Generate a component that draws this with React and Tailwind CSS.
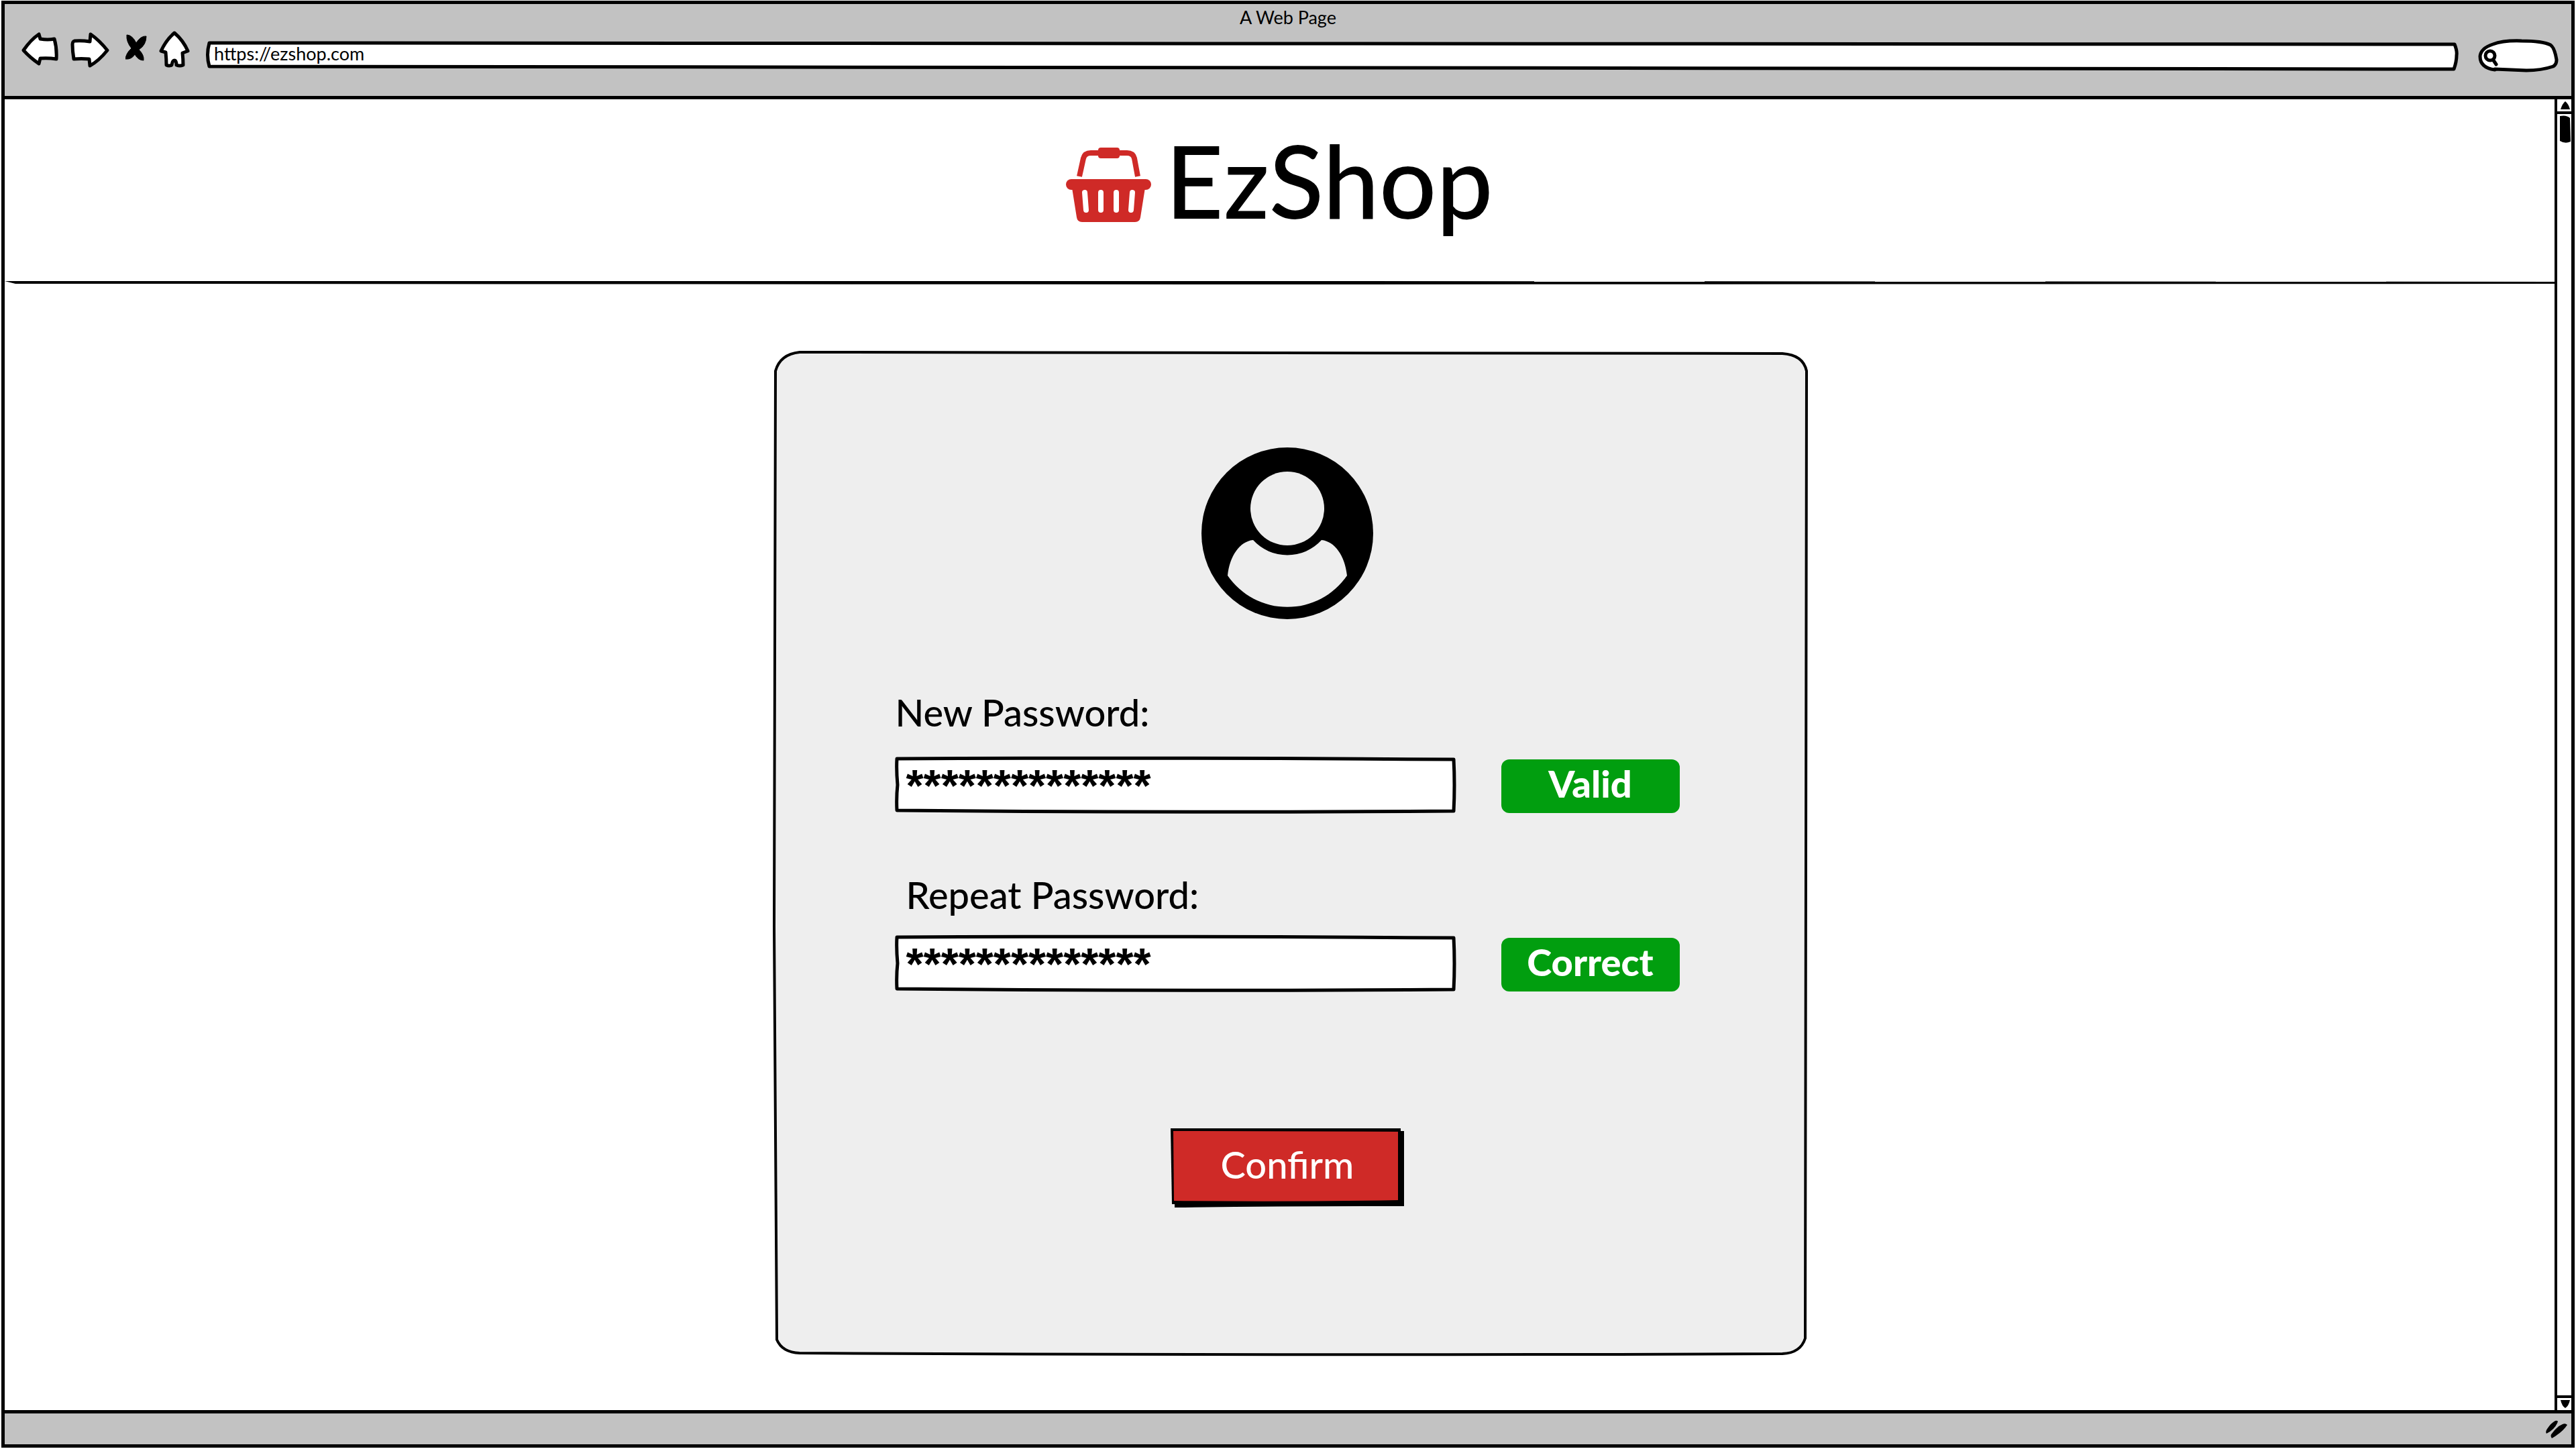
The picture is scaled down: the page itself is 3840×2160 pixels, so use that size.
import React from "react";

const iconStroke = {
  fill: "#fff",
  stroke: "#000",
  strokeWidth: 5,
  strokeLinejoin: "round",
  strokeLinecap: "round",
};

function NavButton({ label, className, viewBox, children }) {
  return (
    <button type="button" aria-label={label} className="block shrink-0">
      <svg viewBox={viewBox} className={className} aria-hidden="true">
        {children}
      </svg>
    </button>
  );
}

// Hand-drawn outline that stretches with the box it decorates.
function Sketch({ viewBox, children }) {
  return (
    <svg
      viewBox={viewBox}
      preserveAspectRatio="none"
      aria-hidden="true"
      className="pointer-events-none absolute inset-0 h-full w-full overflow-visible"
    >
      {children}
    </svg>
  );
}

function BrowserBar() {
  return (
    <header className="shrink-0 border-b-5 border-black bg-[#c2c2c2] pb-9">
      <p className="text-center text-[27px] leading-10">A Web Page</p>
      <div className="flex h-[61px] items-start pr-[19px] pl-6">
        <nav aria-label="Browser" className="flex">
          <NavButton label="Back" className="h-15 w-14" viewBox="31 46 56 60">
            <path
              {...iconStroke}
              d="M35 75 Q46 59 58 51 L60 58 Q71 60 81 58 Q85 72 84 88 Q72 86 60 87 L58 95 Q45 86 35 75Z"
            />
          </NavButton>
          <NavButton label="Forward" className="ml-4 h-15 w-15" viewBox="103 46 60 60">
            <path
              {...iconStroke}
              d="M111 61 Q122 60 134 62 L135 51 Q148 60 160 75 Q147 91 134 98 L133 88 Q121 87 110 88 Q108 76 108 66 Q108 62 111 61Z"
            />
          </NavButton>
          <NavButton label="Stop" className="ml-6 h-15 w-8" viewBox="188 46 32 60">
            <path
              d="M190 52 Q198 52 204 64 Q211 53 219 54 Q219 67 208 74 Q216 82 215 90 Q207 90 202 81 Q197 89 188 88 Q189 79 197 72 Q189 62 190 52Z"
              stroke="#000"
              strokeWidth="1"
            />
          </NavButton>
          <NavButton label="Home" className="ml-4 h-15 w-12" viewBox="235 46 48 60">
            <path
              {...iconStroke}
              d="M260 49 Q273 60 280 76 L272 79 Q273 88 273 97 Q268 99 263 97 Q263 90 260 90 Q257 90 256 97 Q252 99 248 97 Q248 88 247 78 L240 76 Q248 59 260 49Z"
            />
          </NavButton>
        </nav>
        <div className="relative mt-4 ml-6 h-11 flex-1">
          <Sketch viewBox="0 0 3357 44">
            <path
              {...iconStroke}
              vectorEffect="non-scaling-stroke"
              d="M5 2 L3352 4 Q3356 14 3355 20 Q3355 30 3351 41 L5 37 Q0 20 5 2Z"
            />
          </Sketch>
          <input
            type="text"
            aria-label="Address"
            defaultValue="https://ezshop.com"
            className="relative block h-9 w-full bg-transparent px-3 text-[27px] leading-9 outline-none"
          />
        </div>
        <div className="relative mt-3 ml-[30px] h-[50px] w-30 shrink-0">
          <Sketch viewBox="0 0 120 50">
            <path
              {...iconStroke}
              d="M25 46 Q3 43 3 26 Q4 14 22 8 Q38 2 65 3 Q96 3 108 9 Q114 13 117 31 Q117 38 112 41 Q94 47 72 47 Q48 46 25 45Z"
            />
            <circle cx="18" cy="25" r="7" {...iconStroke} />
            <path {...iconStroke} d="M23 32 L27 38" />
          </Sketch>
          <input
            type="search"
            aria-label="Search"
            className="relative block h-full w-full bg-transparent pr-3 pl-8 text-[27px] outline-none"
          />
        </div>
      </div>
    </header>
  );
}

function BasketIcon() {
  return (
    <svg viewBox="0 0 128 112" className="h-28 w-32 shrink-0" aria-hidden="true">
      <path
        d="M20 43 L26 16 Q28 8 37 8 H91 Q100 8 102 16 L107 43"
        fill="none"
        stroke="#cf2a27"
        strokeWidth="8"
      />
      <rect x="48" y="0" width="32" height="16" rx="4" fill="#cf2a27" />
      <rect x="0" y="47" width="127" height="16" rx="8" fill="#cf2a27" />
      <path d="M9 60 H118 L111 104 Q110 111 103 111 H24 Q17 111 16 104Z" fill="#cf2a27" />
      <path
        d="M28 67 L30 93 M52 67 V93 M75 67 V93 M99 67 L97 93"
        stroke="#fff"
        strokeWidth="8"
        strokeLinecap="round"
      />
    </svg>
  );
}

function Avatar() {
  return (
    <svg viewBox="0 0 256 256" className="h-64 w-64" aria-label="User" role="img">
      <circle cx="128" cy="128" r="128" />
      <circle cx="128" cy="91" r="55" fill="#eee" />
      <path
        d="M77 138 A69 69 0 0 0 179 138 C199 140 214 162 217 191 A108 108 0 0 1 39 191 C42 162 57 140 77 138Z"
        fill="#eee"
      />
    </svg>
  );
}

function PasswordField({ id, label, labelClass, status }) {
  return (
    <div>
      <label htmlFor={id} className={labelClass}>
        {label}
      </label>
      <div className="flex items-end gap-17">
        <div className="relative h-21 flex-1">
          <Sketch viewBox="0 0 835 84">
            <path
              d="M2 3 Q420 1 832 4 Q834 42 832 81 Q420 84 2 80 Q1 60 3 42 Q1 20 2 3Z"
              fill="#fff"
              stroke="#000"
              strokeWidth="5"
              strokeLinejoin="round"
            />
          </Sketch>
          <input
            id={id}
            type="text"
            defaultValue="**************"
            className="relative block h-full w-full bg-transparent px-4 font-['Liberation_Sans',sans-serif] text-[67px] font-bold outline-none"
          />
        </div>
        <output
          htmlFor={id}
          className="block h-20 w-[266px] rounded-xl bg-[#019e0f] text-center font-black leading-18 text-white"
        >
          {status}
        </output>
      </div>
    </div>
  );
}

function ScrollBar() {
  return (
    <div className="flex w-[25px] shrink-0 flex-col border-l-4 border-black">
      <button
        type="button"
        aria-label="Scroll up"
        className="flex h-[22px] items-center justify-end border-b-4 border-black pr-0.5"
      >
        <svg viewBox="0 0 14 12" className="h-3 w-3.5" aria-hidden="true">
          <path d="M0 12 Q3 3 7 0 Q12 4 14 12Z" />
        </svg>
      </button>
      <div className="flex-1 pt-0.5 pl-1">
        <svg viewBox="0 0 16 41" className="h-[41px] w-4" aria-hidden="true">
          <path d="M0 1 Q10 -1 15 4 L16 39 Q8 43 0 38Z" />
        </svg>
      </div>
      <button
        type="button"
        aria-label="Scroll down"
        className="flex h-[22px] items-center justify-end border-t-4 border-black pr-0.5"
      >
        <svg viewBox="0 0 14 12" className="h-3 w-3.5" aria-hidden="true">
          <path d="M0 0 H14 Q12 9 7 12 Q2 9 0 0Z" />
        </svg>
      </button>
    </div>
  );
}

export default function App() {
  return (
    <div className="flex min-h-screen flex-col bg-white px-0.5 pt-px pb-0.5 font-[Lato,sans-serif] text-[56px] text-black">
      <div className="flex flex-1 flex-col border-5 border-black">
        <BrowserBar />

        <div className="flex flex-1">
          <main className="flex-1">
            <div className="flex h-[271px] items-center justify-center gap-5 pb-4">
              <BasketIcon />
              <h1 className="pb-4 text-[150px] leading-none font-medium">EzShop</h1>
            </div>
            <svg
              viewBox="0 0 3800 6"
              preserveAspectRatio="none"
              className="block h-1.5 w-full"
              aria-hidden="true"
            >
              <path d="M0 0 L1900 0 L3800 1 V4 L1900 5 L16 4Z" />
            </svg>

            <section className="relative mx-auto mt-25 mb-20 w-[1540px] left-4 pr-[190px] pl-[181px] pt-[142px] pb-[220px]">
              <Sketch viewBox="0 0 1540 1494">
                <path
                  d="M38 0 Q770 -2 1503 2 Q1534 4 1539 28 Q1540 750 1537 1470 Q1530 1492 1503 1493 Q770 1496 38 1492 Q12 1491 4 1472 Q3 1200 0 857 Q1 400 2 28 Q9 3 38 0Z"
                  fill="#eee"
                  stroke="#000"
                  strokeWidth="4"
                />
              </Sketch>
              <form className="relative" onSubmit={(e) => e.preventDefault()}>
                <div className="flex justify-center">
                  <Avatar />
                </div>
                <div className="mt-[105px] space-y-22">
                  <PasswordField
                    id="new-password"
                    label="New Password:"
                    labelClass="block pb-8 leading-17 font-medium"
                    status="Valid"
                  />
                  <PasswordField
                    id="repeat-password"
                    label="Repeat Password:"
                    labelClass="block pb-[26px] pl-4 leading-17 font-medium"
                    status="Correct"
                  />
                </div>
                <div className="mt-[203px] flex justify-center">
                  <button
                    type="submit"
                    className="relative h-[118px] w-[348px] pb-2 font-medium text-white"
                  >
                    <Sketch viewBox="0 0 348 118">
                      <path d="M6 5 L348 5 V117 Q170 117 6 119Z" />
                      <path d="M0 1 L343 1 V113 L2 114Z" />
                      <path d="M4 5 L339 6 V108 Q170 111 5 109Z" fill="#cf2a27" />
                    </Sketch>
                    <span className="relative">Confirm</span>
                  </button>
                </div>
              </form>
            </section>
          </main>
          <ScrollBar />
        </div>

        <footer className="flex h-[51px] shrink-0 items-center justify-end border-t-5 border-black bg-[#c2c2c2] pr-1.5">
          <svg viewBox="0 0 32 27" className="h-[27px] w-8" aria-hidden="true">
            <path d="M14 1 Q17 0 18 2 Q14 14 1 20 Q-1 17 2 13 Q8 4 14 1Z" />
            <path d="M25 6 Q29 4 32 7 Q25 18 9 27 Q6 23 9 20 Q17 9 25 6Z" />
          </svg>
        </footer>
      </div>
    </div>
  );
}
